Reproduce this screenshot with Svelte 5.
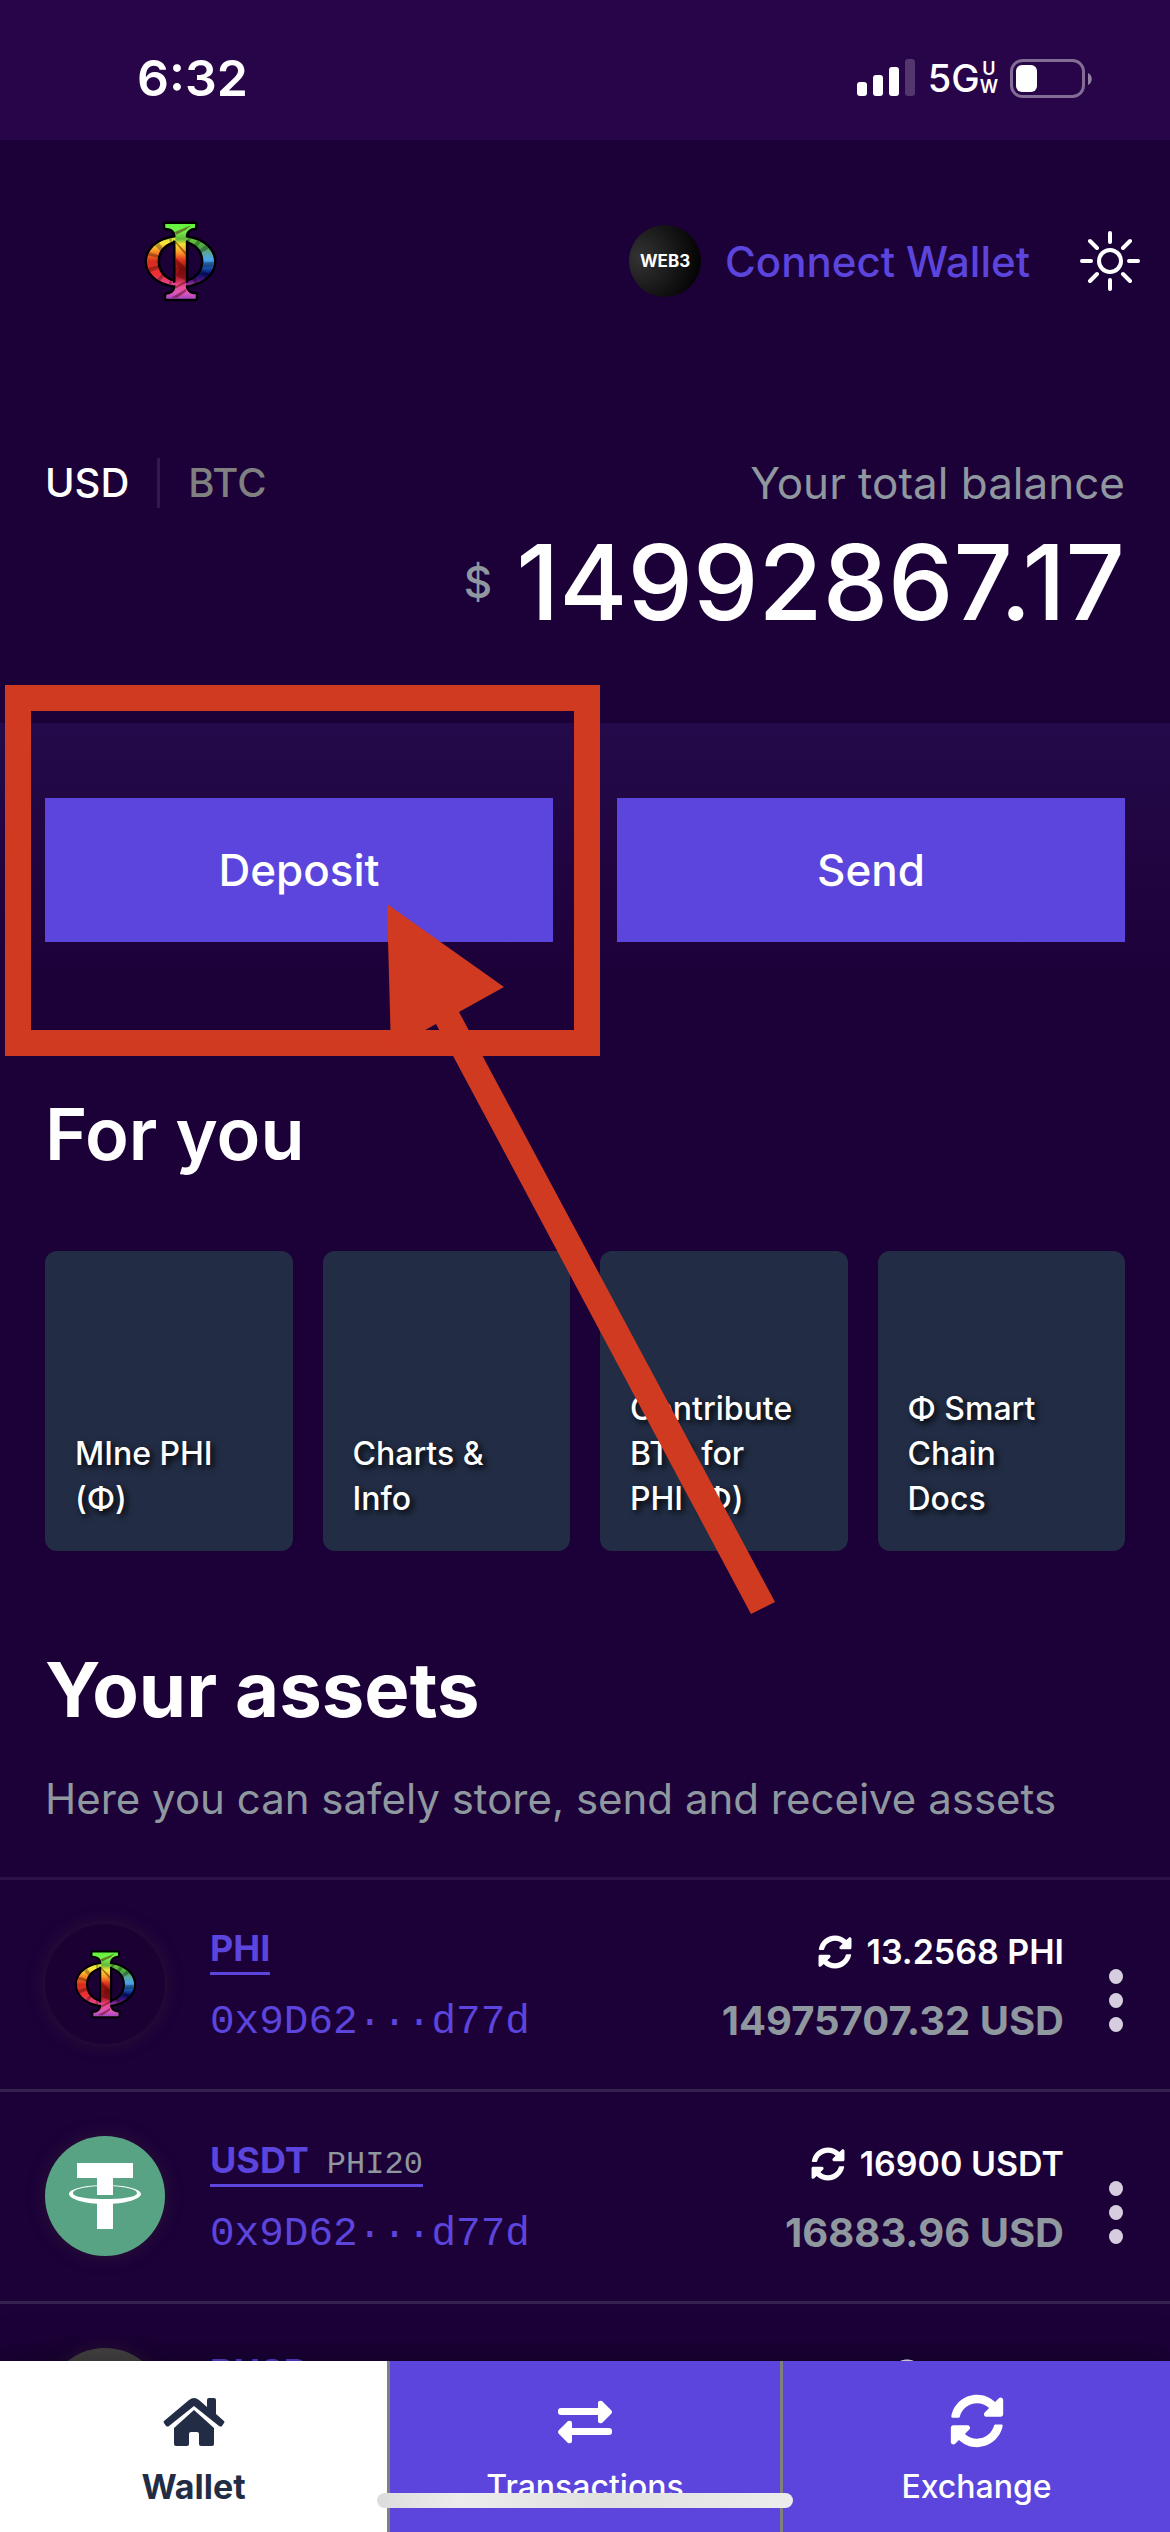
<script>
  const address = '0x9D62···d77d';
  const cards = ['MIne PHI (Φ)', 'Charts & Info', 'Contribute BTC for PHI (Φ)', 'Φ Smart Chain Docs'];
  const assets = [
    { symbol: 'PHI', icon: 'phi', amount: '13.2568 PHI', value: '14975707.32 USD', address },
    { symbol: 'USDT', network: 'PHI20', icon: 'usdt', amount: '16900 USDT', value: '16883.96 USD', address },
    { symbol: 'BUSD', icon: 'busd', amount: '0 BUSD' }
  ];
</script>

{#snippet phi(id)}
  <svg class="phi" viewBox="130 91 220 244" aria-hidden="true">
    <defs>
      <linearGradient id="{id}-left" x1="0" y1="0" x2="0" y2="1">
        <stop offset="0" stop-color="#c9e23a" />
        <stop offset=".12" stop-color="#ffe83a" />
        <stop offset=".3" stop-color="#f98a25" />
        <stop offset=".5" stop-color="#d62c1c" />
        <stop offset=".76" stop-color="#ee2f35" />
        <stop offset="1" stop-color="#e0479c" />
      </linearGradient>
      <linearGradient id="{id}-right" x1="0" y1="0" x2="0" y2="1">
        <stop offset="0" stop-color="#6acb3d" />
        <stop offset=".2" stop-color="#4aa844" />
        <stop offset=".32" stop-color="#5aa79a" />
        <stop offset=".46" stop-color="#4aa5ef" />
        <stop offset=".62" stop-color="#1b55ac" />
        <stop offset=".76" stop-color="#060f74" />
        <stop offset=".88" stop-color="#4a137a" />
        <stop offset="1" stop-color="#a83aa8" />
      </linearGradient>
      <linearGradient id="{id}-stem" x1="0" y1="0" x2="0" y2="1">
        <stop offset="0" stop-color="#63f53e" />
        <stop offset=".1" stop-color="#74f04c" />
        <stop offset=".2" stop-color="#63b53a" />
        <stop offset=".27" stop-color="#f2e335" />
        <stop offset=".38" stop-color="#fb9a27" />
        <stop offset=".48" stop-color="#e0351e" />
        <stop offset=".6" stop-color="#8c1212" />
        <stop offset=".72" stop-color="#b51c2a" />
        <stop offset=".82" stop-color="#e94a8c" />
        <stop offset=".92" stop-color="#dd57b8" />
        <stop offset="1" stop-color="#a548c2" />
      </linearGradient>
    </defs>
    <g stroke="#000" stroke-width="15" stroke-linejoin="round" fill="#000">
      <path fill-rule="evenodd" d="M240 140c57 0 101 32 101 73s-44 73-101 73-101-32-101-73 44-73 101-73zm0 10c-40 0-69 26-69 63s29 63 69 63 69-26 69-63-29-63-69-63z" />
      <path d="M194 100h90v11c-18 1-28 12-28 26v148c0 16 11 26 30 27v13h-89v-12c18-1 28-12 28-27V137c0-15-10-25-31-26z" />
    </g>
    <path fill="url(#{id}-left)" d="M240 140c-57 0-101 32-101 73s44 73 101 73v-10c-40 0-69-26-69-63s29-63 69-63z" />
    <path fill="url(#{id}-right)" d="M240 140c57 0 101 32 101 73s-44 73-101 73v-10c40 0 69-26 69-63s-29-63-69-63z" />
    <g fill="#000" fill-opacity=".28">
      <path d="M163 165l12-9 12 16-8 9zM141 195l5-10 31 10-3 7zM205 146l8-3 3 13-6 2zM144 232l29-8 3 9-27 12zM170 266l14-15 7 6-12 15zM204 281l5-14 7 2-3 14z" />
      <path d="M262 142l10 1-6 14-7-2zM290 149l12 6-15 16-8-6zM315 164l10 10-23 14-7-9zM309 216l31-2-2 14-29 2zM304 238l26 14-12 12-21-16zM283 257l11 18-12 6-8-18z" />
    </g>
    <path fill="none" stroke="#000" stroke-width="7" d="M221 150v127M260 150v127" />
    <path fill="url(#{id}-stem)" d="M194 100h90v11c-18 1-28 12-28 26v148c0 16 11 26 30 27v13h-89v-12c18-1 28-12 28-27V137c0-15-10-25-31-26z" />
    <path fill="#5c0606" fill-opacity=".5" d="M225 202l31 30v38l-31-15 14-19-14-16zM225 152l31 32v10l-31-36zM222 124l50-20-16 14-28 14zM212 322l44-26v8l-26 18zM256 278l-31 16v-6l31-17z" />
  </svg>
{/snippet}

{#snippet sync()}
  <svg class="sync" viewBox="0 0 512 512" fill="currentColor" aria-hidden="true">
    <path d="M370.72 133.28C339.458 104.008 298.888 87.962 255.848 88c-77.458.068-144.328 53.178-162.791 126.85-1.344 5.363-6.122 9.15-11.651 9.15H24.103c-7.498 0-13.194-6.807-11.807-14.176C33.933 94.924 134.813 8 256 8c66.448 0 126.791 26.136 171.315 68.685L463.03 40.97C478.149 25.851 504 36.559 504 57.941V192c0 13.255-10.745 24-24 24H345.941c-21.382 0-32.09-25.851-16.971-40.971l41.75-41.749zM32 296h134.059c21.382 0 32.09 25.851 16.971 40.971l-41.75 41.75c31.262 29.273 71.835 45.319 114.876 45.28 77.418-.07 144.315-53.144 162.787-126.849 1.344-5.363 6.122-9.15 11.651-9.15h57.304c7.498 0 13.194 6.807 11.807 14.176C478.067 417.076 377.187 504 256 504c-66.448 0-126.791-26.136-171.315-68.685L48.97 471.03C33.851 486.149 8 475.441 8 454.059V320c0-13.255 10.745-24 24-24z" />
  </svg>
{/snippet}

<div class="app">
  <div class="status">
    <span class="time">6:32</span>
    <div class="signals">
      <svg class="bars" viewBox="0 0 58 38" aria-hidden="true">
        <g fill="#fff">
          <rect x="0" y="23" width="10" height="14" rx="3" />
          <rect x="16" y="16" width="10" height="21" rx="3" />
          <rect x="32" y="8" width="10" height="29" rx="3" />
          <rect x="48" y="0" width="10" height="37" rx="3" fill-opacity=".2" />
        </g>
      </svg>
      <span class="network">5G</span>
      <span class="uw"><span>U</span><span>W</span></span>
      <svg class="battery" viewBox="0 0 82 39" aria-hidden="true">
        <rect x="1.5" y="1.5" width="72" height="36" rx="11" fill="none" stroke="#fff" stroke-opacity=".42" stroke-width="3" />
        <rect x="6" y="6" width="21" height="27" rx="6" fill="#fff" />
        <path d="M78 14c5 2 5 10 0 12z" fill="#fff" fill-opacity=".5" />
      </svg>
    </div>
  </div>

  <main>
    <header>
      <a class="brand" href="#home" aria-label="PHI home">{@render phi('brand')}</a>
      <button class="connect"><span class="web3">WEB3</span>Connect Wallet</button>
      <button class="theme" aria-label="Toggle theme">
        <svg viewBox="0 0 60 60" fill="none" stroke="#fff" stroke-width="4" stroke-linecap="round" aria-hidden="true">
          <circle cx="30" cy="30" r="11" />
          <path d="M30 2v9M30 49v9M2 30h9M49 30h9M10 10l7 7M43 43l7 7M50 10l-7 7M17 43l-7 7" />
        </svg>
      </button>
    </header>

    <section class="balance">
      <div class="balance-top">
        <div class="units">
          <button class="unit active">USD</button>
          <button class="unit">BTC</button>
        </div>
        <span class="caption">Your total balance</span>
      </div>
      <div class="total"><span class="sign">$</span><strong>14992867.17</strong></div>
    </section>

    <section class="actions">
      <button>Deposit</button>
      <button>Send</button>
      <div class="frame"></div>
      <svg class="arrow" viewBox="0 0 390 712" fill="#d03a21" aria-hidden="true">
        <path d="M0 0l117 83-45 25 316 590-24 12L49 120 4 145z" />
      </svg>
    </section>

    <section class="for-you">
      <h2>For you</h2>
      <div class="cards">
        {#each cards as card}
          <a class="card" href="#card">{card}</a>
        {/each}
      </div>
    </section>

    <section class="assets">
      <h2>Your assets</h2>
      <p>Here you can safely store, send and receive assets</p>
      <ul>
        {#each assets as asset}
          <li>
            <div class="coin {asset.icon}">
              {#if asset.icon === 'phi'}
                {@render phi('coin')}
              {:else if asset.icon === 'usdt'}
                <svg viewBox="0 0 120 120" fill="#fff" aria-hidden="true">
                  <path d="M32 27h56v15H68v17H52V42H32z" />
                  <path d="M52 66h16v27H52z" />
                  <path fill-rule="evenodd" d="M60 49c20 0 36 4 36 9s-16 10-36 10-36-5-36-10 16-9 36-9zm0 1c-18 0-32 3-32 7s14 6 32 6 32-2 32-6-14-7-32-7z" />
                </svg>
              {/if}
            </div>
            <div class="identity">
              <a class="name" href="#asset">{asset.symbol}{#if asset.network}<small>{asset.network}</small>{/if}</a>
              {#if asset.address}<span class="address">{asset.address}</span>{/if}
            </div>
            <div class="holdings">
              <span class="amount">{@render sync()}{asset.amount}</span>
              {#if asset.value}<span class="value">{asset.value}</span>{/if}
            </div>
            <button class="more" aria-label="More for {asset.symbol}"><i></i><i></i><i></i></button>
          </li>
        {/each}
      </ul>
    </section>
  </main>

  <nav>
    <a class="current" href="#wallet">
      <svg viewBox="0 0 62 54" fill="currentColor" aria-hidden="true">
        <path d="M1 27L26 6q5-4 10 0l8 7V6q0-2 2-2h5q2 0 2 2v14l8 7q1 1 0 2l-2 3q-1 1-3 0L31 12 6 32q-1 1-3 0l-2-3q-1-1 0-2z" />
        <path d="M31 16l20 18v16q0 2-2 2H38q-2 0-2-2V40q0-2-2-2h-6q-2 0-2 2v10q0 2-2 2H13q-2 0-2-2V34z" />
      </svg>
      Wallet
    </a>
    <a href="#transactions">
      <svg viewBox="0 0 62 54" fill="currentColor" aria-hidden="true">
        <path d="M7 14h37V9q0-3 4-2l9 9q2 2 0 4l-9 9q-4 1-4-2v-6H7q-3 0-3-3v-1q0-3 3-3z" />
        <path d="M55 34H18v-5q0-3-4-2l-9 9q-2 2 0 4l9 9q4 1 4-2v-6h37q3 0 3-3v-1q0-3-3-3z" />
      </svg>
      Transactions
    </a>
    <a href="#exchange">{@render sync()}Exchange</a>
    <div class="home-bar"></div>
  </nav>
</div>

<style>
  :global(body) {
    margin: 0;
    background: #1c0139;
  }
  .app {
    display: flex;
    flex-direction: column;
    height: 100vh;
    background: #1c0139;
    color: #fff;
    font-family: Inter, 'Liberation Sans', sans-serif;
    font-size: 40px;
  }
  button {
    border: 0;
    padding: 0;
    background: none;
    color: inherit;
    font: inherit;
  }
  a {
    color: inherit;
    text-decoration: none;
  }
  svg {
    display: block;
  }
  .status {
    flex: none;
    display: flex;
    align-items: center;
    justify-content: space-between;
    height: 140px;
    box-sizing: border-box;
    padding: 16px 78px 0 137px;
    background: #280449;
  }
  .time {
    font-size: 50px;
    font-weight: 600;
  }
  .signals {
    display: flex;
    align-items: center;
  }
  .bars {
    width: 58px;
    height: 38px;
  }
  .network {
    margin-left: 13px;
    font-size: 38px;
    font-weight: 500;
  }
  .uw {
    display: flex;
    flex-direction: column;
    align-items: center;
    font-size: 18px;
    font-weight: 600;
    line-height: 18px;
  }
  .battery {
    width: 82px;
    height: 39px;
    margin-left: 12px;
  }
  main {
    position: relative;
    flex: 1;
    min-height: 0;
    overflow: hidden;
  }
  header {
    display: flex;
    align-items: center;
    height: 242px;
    padding: 0 30px 0 144px;
  }
  .brand {
    margin-right: auto;
  }
  .brand .phi {
    width: 73px;
    height: 81px;
  }
  .connect {
    display: flex;
    align-items: center;
    gap: 24px;
    color: #5c45dc;
    font-size: 42px;
    font-weight: 500;
  }
  .web3 {
    display: flex;
    align-items: center;
    justify-content: center;
    width: 72px;
    height: 72px;
    border-radius: 50%;
    background: radial-gradient(circle at 15% 45%, #333, #000 90%);
    color: #fff;
    font-size: 17px;
    font-weight: 700;
  }
  .theme {
    margin-left: 50px;
  }
  .theme svg {
    width: 60px;
    height: 60px;
  }
  .balance {
    padding: 76px 45px 81px;
  }
  .balance-top {
    display: flex;
    justify-content: space-between;
    align-items: center;
    height: 50px;
    margin-bottom: 14px;
  }
  .units {
    display: flex;
  }
  .unit {
    font-weight: 500;
    color: #808080;
    line-height: 50px;
  }
  .unit.active {
    color: #fff;
    margin-right: 28px;
    padding-right: 28px;
    border-right: 3px solid #2f1a4b;
  }
  .caption {
    color: #8f979f;
    font-size: 44px;
  }
  .total {
    display: flex;
    align-items: center;
    justify-content: flex-end;
    gap: 24px;
    line-height: 120px;
  }
  .sign {
    color: #8f979f;
    font-size: 44px;
    font-weight: 500;
  }
  .total strong {
    font-size: 104px;
    font-weight: 500;
  }
  .actions {
    position: relative;
    display: grid;
    grid-template-columns: 1fr 1fr;
    gap: 64px;
    padding: 75px 45px;
    background: linear-gradient(#240a4a, #1f033e 60%, #1c0139 85%);
  }
  .actions button {
    height: 144px;
    background: #5c45dc;
    font-size: 44px;
    font-weight: 500;
  }
  .frame {
    position: absolute;
    left: 5px;
    top: -38px;
    width: 543px;
    height: 319px;
    border: 26px solid #d03a21;
    pointer-events: none;
  }
  .arrow {
    position: absolute;
    z-index: 1;
    left: 387px;
    top: 181px;
    width: 390px;
    height: 712px;
    pointer-events: none;
  }
  h2 {
    margin: 0;
    font-size: 72px;
    font-weight: 600;
    line-height: 90px;
  }
  .for-you {
    padding: 72px 45px 0;
  }
  .cards {
    display: grid;
    grid-template-columns: repeat(4, 1fr);
    gap: 30px;
    margin-top: 72px;
  }
  .card {
    display: flex;
    align-items: flex-end;
    height: 300px;
    box-sizing: border-box;
    padding: 30px 50px 30px 30px;
    border-radius: 12px;
    background: #222d45;
    font-size: 32px;
    font-weight: 500;
    line-height: 45px;
    text-shadow: 3px 3px 6px #000;
  }
  .assets {
    padding-top: 93px;
  }
  .assets h2,
  .assets p {
    padding: 0 45px;
  }
  .assets h2 {
    font-size: 76px;
    font-weight: 700;
  }
  .assets p {
    margin: 35px 0 48px;
    color: #8f979f;
    font-size: 42px;
    line-height: 60px;
  }
  ul {
    margin: 0;
    padding: 0;
    list-style: none;
  }
  li {
    display: flex;
    align-items: flex-start;
    padding: 44px 45px 43px;
    border-top: 3px solid #35204e;
  }
  li:first-child {
    border-color: #2b1247;
  }
  .coin {
    display: flex;
    align-items: center;
    justify-content: center;
    width: 120px;
    height: 120px;
    margin-right: 45px;
    border-radius: 50%;
    box-shadow: 0 0 18px rgba(70, 60, 50, 0.35);
  }
  .coin.phi {
    background: #1b0133;
  }
  .coin.usdt {
    background: #58a384;
  }
  .coin.busd {
    background: #4a4648;
  }
  .coin .phi {
    width: 63px;
    height: 69px;
  }
  .identity,
  .holdings {
    display: flex;
    flex-direction: column;
    line-height: 48px;
  }
  .identity {
    align-items: flex-start;
    gap: 23px;
    margin-right: auto;
    color: #5c45dc;
  }
  .name {
    height: 48px;
    border-bottom: 3px solid;
    font-size: 36px;
    font-weight: 700;
  }
  .name small {
    margin-left: 18px;
    color: #8f979f;
    font-family: 'Liberation Mono', monospace;
    font-size: 32px;
    font-weight: 400;
    line-height: 36px;
  }
  .address {
    font-family: 'Liberation Mono', monospace;
    font-size: 41px;
  }
  .holdings {
    align-items: flex-end;
    gap: 21px;
    padding-top: 4px;
    font-weight: 600;
  }
  .amount {
    display: flex;
    align-items: center;
    gap: 15px;
    font-size: 34px;
  }
  .amount .sync {
    width: 34px;
    height: 34px;
  }
  .value {
    color: #8f979f;
    font-size: 40px;
    font-weight: 700;
  }
  .more {
    display: flex;
    flex-direction: column;
    gap: 9px;
    margin: 45px 2px 0 45px;
  }
  .more i {
    width: 14px;
    height: 15px;
    border-radius: 50%;
    background: #d6cede;
  }
  nav {
    position: relative;
    flex: none;
    display: grid;
    grid-template-columns: repeat(3, 1fr);
    background: #5c45dc;
    box-shadow: 0 0 40px rgba(0, 0, 0, 0.45);
    font-size: 32px;
    font-weight: 500;
    line-height: 40px;
  }
  nav a {
    display: flex;
    flex-direction: column;
    align-items: center;
    gap: 19px;
    padding: 33px 0 25px;
  }
  nav a:first-child {
    border-right: 3px solid #808080;
  }
  nav a:nth-child(3) {
    border-left: 3px solid #808080;
  }
  nav svg {
    width: 62px;
    height: 54px;
  }
  .current {
    background: #fff;
    color: #222d45;
    font-size: 34px;
    font-weight: 700;
  }
  .home-bar {
    position: absolute;
    left: 50%;
    bottom: 24px;
    width: 416px;
    height: 15px;
    margin-left: -208px;
    border-radius: 8px;
    background: linear-gradient(90deg, #dcdcdc, #ececec 20%, #e0e0e0 55%, #ececec);
  }
</style>
